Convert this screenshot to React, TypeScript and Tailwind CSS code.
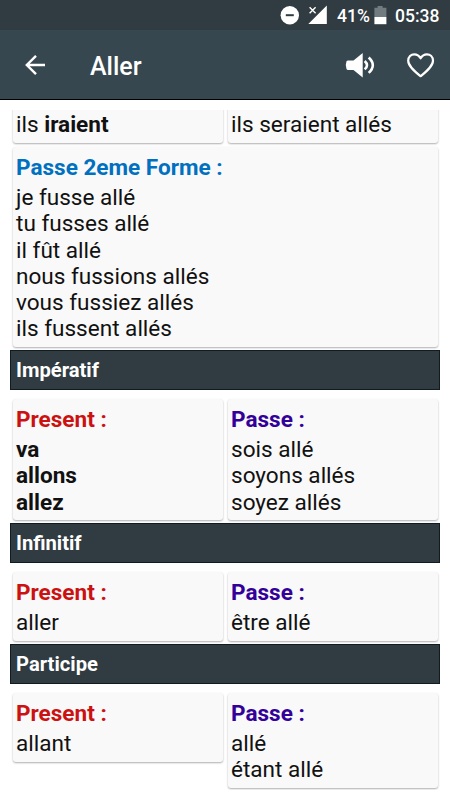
import type { ReactNode } from "react";

type CardProps = {
  title?: string;
  color?: string;
  bold?: boolean;
  lines: ReactNode[];
};

function Card({ title, color, bold, lines }: CardProps) {
  return (
    <div className="min-w-0 flex-1 rounded-[3px] bg-[#f9f9f9] pt-[8px] pr-1 pb-[4.5px] pl-[3px] text-[22.55px] leading-[26.25px] text-[#111] shadow-[0_1px_2px_rgba(0,0,0,0.32)]">
      {title && <h3 className={`mb-[4px] font-bold ${color}`}>{title}</h3>}
      {lines.map((line, i) => (
        <p key={i} className={bold ? "font-bold" : "font-normal"}>
          {line}
        </p>
      ))}
    </div>
  );
}

function SectionBar({ title }: { title: string }) {
  return (
    <h2 className="mt-[3px] mb-[9px] flex h-[39.75px] shrink-0 items-center border border-[#101c20] bg-[#303c42] pt-[1px] pl-[5px] text-[20.2px] font-bold text-white">
      {title}
    </h2>
  );
}

function Row({ children }: { children: ReactNode }) {
  return <div className="flex shrink-0 items-start gap-[5px] pr-[2px] pl-[3px]">{children}</div>;
}

function StatusBar() {
  return (
    <div className="flex h-[30px] items-center bg-[#303c42] pl-[280px] text-white">
      <svg className="h-[20px] w-[20px]" viewBox="0 0 20 20">
        <circle cx="9.8" cy="10.2" r="9.2" fill="#fff" />
        <path d="M5.8 10.2h8" stroke="#303c42" strokeWidth="2" />
      </svg>
      <svg className="ml-[8px] h-[20px] w-[20px]" viewBox="0 0 20 20">
        <path d="M18.8 0.5V19H0.3z" fill="#fff" />
        <path d="M0 0h8.500v9H0z" fill="#303c42" />
        <path d="M1.6 2.2l6 6M7.6 2.2l-6 6" stroke="#fff" strokeWidth="1.4" />
      </svg>
      <span className="ml-[9px] w-[35px] pt-[1px] text-[17.5px] leading-[30px] font-medium whitespace-nowrap">
        41%
      </span>
      <svg className="ml-[2px] h-[20px] w-[13px]" viewBox="0 0 13 20">
        <path d="M3.6 1h5v1.8h3.8V12H0.4V2.800h3.200z" fill="#727b80" />
        <path d="M0.4 12h12v7.200H0.400z" fill="#fff" />
      </svg>
      <span className="ml-[8px] pt-[1px] text-[17.5px] leading-[30px] font-medium">05:38</span>
    </div>
  );
}

function AppBar() {
  return (
    <header className="flex h-[70px] items-center border-b border-black bg-[#37474f] pl-[24px] text-white">
      <svg className="h-[22px] w-[22px]" viewBox="0 0 22 22" fill="none" stroke="#fff" strokeWidth="2.4">
        <path d="M21 11H3M12 1.800L2.800 11l9.200 9.200" />
      </svg>
      <h1 className="ml-[44px] flex-1 pt-[4px] text-[25px] leading-none font-medium">Aller</h1>
      <svg className="h-[28px] w-[32px]" viewBox="0 0 32 28">
        <path d="M1.500 10.300Q2 9.400 3 9.400h5.500L17.700 2v24.500L8.500 19H3Q2 19 1.500 18Q0 14.200 1.500 10.300z" fill="#fff" />
        <path d="M19.700 10q4.600 4.200 0 8.400M23.700 6.500q8.200 7.700 0 15.400" fill="none" stroke="#fff" strokeWidth="2.600" />
      </svg>
      <svg className="mr-[15px] ml-[29px] h-[26px] w-[29px]" viewBox="0 0 29 26">
        <path
          d="M14.600 24.200C9 19.700 2.200 14.300 2.200 8.800C2.200 4.800 5 2.300 8.300 2.300c2.700 0 4.900 1.500 6.300 4c1.400-2.500 3.600-4 6.300-4c3.300 0 6.100 2.500 6.100 6.500c0 5.500-6.800 10.900-12.400 15.400z"
          fill="none"
          stroke="#fff"
          strokeWidth="2.200"
          strokeLinejoin="round"
        />
      </svg>
    </header>
  );
}

export default function App() {
  return (
    <div className="h-[800px] w-[450px] overflow-hidden bg-white font-['Roboto','Liberation_Sans',sans-serif]">
      <StatusBar />
      <AppBar />
      {/* scrolled to the end of the list, so the first row is cut at the top */}
      <main className="mx-[10px] mt-[10px] flex h-[680px] flex-col justify-end overflow-hidden pb-[2px]">
        <Row>
          <Card lines={[<>ils <b>iraient</b></>]} />
          <Card lines={["ils seraient allés"]} />
        </Row>
        <div className="h-[4.25px] shrink-0" />
        <Row>
          <Card
            title="Passe 2eme Forme :"
            color="text-[#0070c0]"
            lines={[
              "je fusse allé",
              "tu fusses allé",
              "il fût allé",
              "nous fussions allés",
              "vous fussiez allés",
              "ils fussent allés",
            ]}
          />
        </Row>
        <SectionBar title="Impératif" />
        <Row>
          <Card title="Present :" color="text-[#cc1111]" bold lines={["va", "allons", "allez"]} />
          <Card title="Passe :" color="text-[#330099]" lines={["sois allé", "soyons allés", "soyez allés"]} />
        </Row>
        <SectionBar title="Infinitif" />
        <Row>
          <Card title="Present :" color="text-[#cc1111]" lines={["aller"]} />
          <Card title="Passe :" color="text-[#330099]" lines={["être allé"]} />
        </Row>
        <SectionBar title="Participe" />
        <Row>
          <Card title="Present :" color="text-[#cc1111]" lines={["allant"]} />
          <Card title="Passe :" color="text-[#330099]" lines={["allé", "étant allé"]} />
        </Row>
      </main>
    </div>
  );
}
